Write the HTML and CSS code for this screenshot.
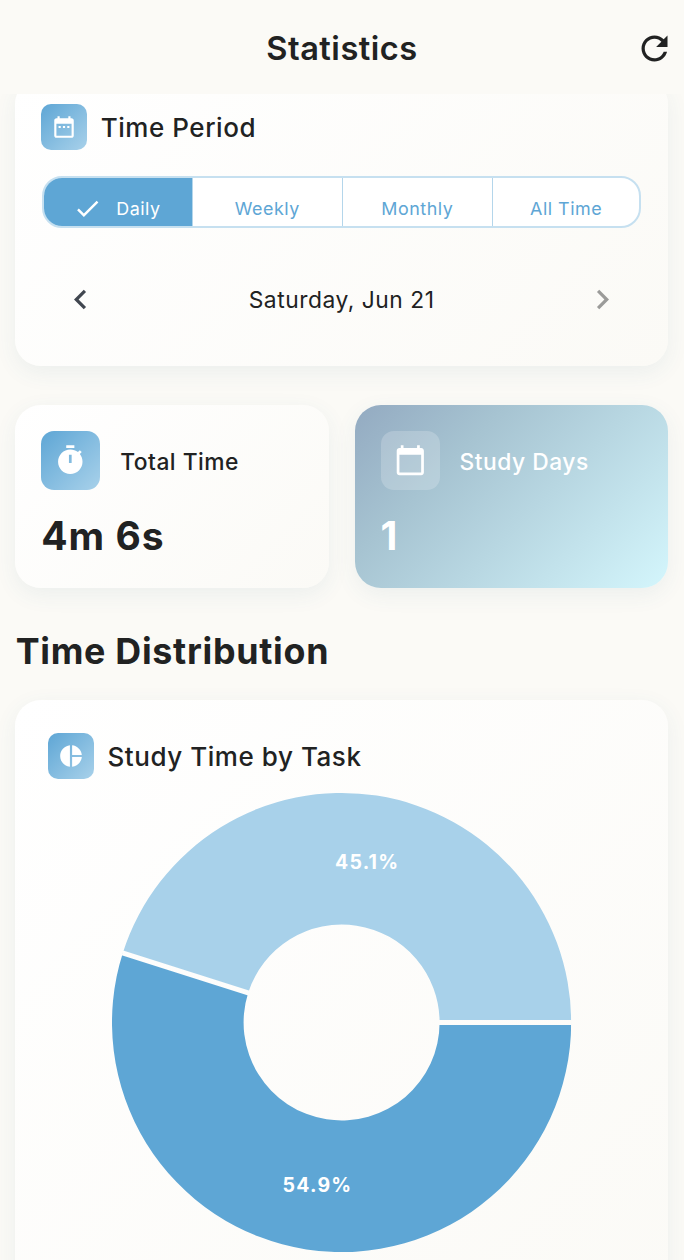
FILE: index.html
```html
<!DOCTYPE html>
<html lang="en">
<head>
<meta charset="utf-8">
<title>Statistics</title>
<link rel="stylesheet" href="styles.css">
</head>
<body>
<header class="app-bar">
  <h1 class="app-title">Statistics</h1>
  <button class="refresh" aria-label="Refresh"><svg class="icon-lg" viewBox="0 0 24 24"><path d="M17.65 6.35C16.2 4.9 14.21 4 12 4c-4.42 0-7.99 3.58-7.99 8s3.57 8 7.99 8c3.73 0 6.84-2.55 7.73-6h-2.08c-.82 2.33-3.04 4-5.65 4-3.31 0-6-2.69-6-6s2.69-6 6-6c1.66 0 3.14.69 4.22 1.78L13 11h7V4l-2.35 2.35z"/></svg></button>
</header>
<main class="content">
  <section class="card period">
    <div class="card-head">
      <span class="badge"><svg class="icon-sm" viewBox="0 0 24 24"><path d="M9 11H7v2h2v-2zm4 0h-2v2h2v-2zm4 0h-2v2h2v-2zm2-7h-1V2h-2v2H8V2H6v2H5c-1.11 0-1.99.9-1.99 2L3 20c0 1.1.89 2 2 2h14c1.1 0 2-.9 2-2V6c0-1.1-.9-2-2-2zm0 16H5V9h14v11z"/></svg></span>
      <h2 class="card-title">Time Period</h2>
    </div>
    <div class="segments">
      <button class="segment selected"><svg class="check" viewBox="0 0 24 24"><path d="M9 16.17 4.83 12l-1.42 1.41L9 19 21 7l-1.41-1.41z"/></svg><span>Daily</span></button>
      <button class="segment"><span>Weekly</span></button>
      <button class="segment"><span>Monthly</span></button>
      <button class="segment"><span>All Time</span></button>
    </div>
    <div class="date-nav">
      <button class="nav-button" aria-label="Previous"><svg class="icon-lg" viewBox="0 0 24 24"><path d="M15.41 7.41 14 6l-6 6 6 6 1.41-1.41L10.83 12z"/></svg></button>
      <span class="date">Saturday, Jun 21</span>
      <button class="nav-button disabled" aria-label="Next"><svg class="icon-lg" viewBox="0 0 24 24"><path d="M10 6 8.59 7.41 13.17 12l-4.58 4.59L10 18l6-6z"/></svg></button>
    </div>
  </section>
  <div class="stats">
    <section class="card stat">
      <div class="stat-head">
        <span class="badge badge-lg"><svg class="icon-md" viewBox="0 0 24 24"><path fill-rule="evenodd" d="M15 1H9v2h6V1zm4.03 6.39 1.42-1.42c-.43-.51-.9-.99-1.41-1.41l-1.42 1.42C16.07 4.74 14.12 4 12 4c-4.97 0-9 4.03-9 9s4.02 9 9 9 9-4.03 9-9c0-2.12-.74-4.07-1.97-5.61zM13 14h-2V8h2v6z"/></svg></span>
        <span class="stat-label">Total Time</span>
      </div>
      <strong class="stat-value">4m 6s</strong>
    </section>
    <section class="card stat tinted">
      <div class="stat-head">
        <span class="badge badge-lg badge-clear"><svg class="icon-md" viewBox="0 0 24 24"><path d="M20 3h-1V1h-2v2H7V1H5v2H4c-1.1 0-2 .9-2 2v16c0 1.1.9 2 2 2h16c1.1 0 2-.9 2-2V5c0-1.1-.9-2-2-2zm0 18H4V8h16v13z"/></svg></span>
        <span class="stat-label">Study Days</span>
      </div>
      <strong class="stat-value">1</strong>
    </section>
  </div>
  <h2 class="section-title">Time Distribution</h2>
  <section class="card distribution">
    <div class="card-head">
      <span class="badge"><svg class="icon-sm" viewBox="0 0 24 24"><path d="M11 2v20c-5.07-.5-9-4.79-9-10s3.93-9.5 9-10zm2.03 0v8.99H22c-.47-4.74-4.24-8.52-8.97-8.99zm0 11.01V22c4.74-.47 8.5-4.25 8.97-8.99h-8.97z"/></svg></span>
      <h3 class="card-title">Study Time by Task</h3>
    </div>
    <svg class="donut" viewBox="-229.6 -230.5 460 460">
      <defs>
        <mask id="gaps" maskUnits="userSpaceOnUse" x="-230" y="-230" width="460" height="460">
          <rect x="-230" y="-230" width="460" height="460" fill="#fff"/>
          <path d="M0 0H230M0 0L-219.2 -69.7" stroke="#000" stroke-width="5"/>
        </mask>
      </defs>
      <g mask="url(#gaps)">
        <path class="slice-dark" d="M229.6 0A229.6 229.6 0 1 1 -218.8 -69.58L-93.4 -29.7A98 98 0 1 0 98 0Z"/>
        <path class="slice-light" d="M229.6 0A229.6 229.6 0 0 0 -218.8 -69.58L-93.4 -29.7A98 98 0 0 1 98 0Z"/>
      </g>
      <text class="slice-label" x="25.5" y="-154">45.1%</text>
      <text class="slice-label" x="-24.2" y="169.2">54.9%</text>
    </svg>
  </section>
</main>
</body>
</html>
```
FILE: styles.css
```css
* { box-sizing: border-box; }
body {
  margin: 0;
  height: 1260px;
  overflow: hidden;
  display: flex;
  flex-direction: column;
  background: #fbfaf6;
  color: #212222;
  font-family: Inter, "Liberation Sans", sans-serif;
}
h1, h2, h3 { margin: 0; }
button { border: 0; padding: 0; margin: 0; background: none; font: inherit; color: inherit; }
svg { display: block; fill: currentColor; }
.app-bar {
  flex: none;
  display: grid;
  grid-template-columns: 60px 1fr 60px;
  align-items: center;
  height: 94px;
  padding-top: 2px;
}
.app-title { grid-column: 2; text-align: center; font-size: 32.6px; font-weight: 600; letter-spacing: 0.5px; }
.refresh { justify-self: end; margin: 1px 10px 0 0; }
.icon-lg { width: 39px; height: 39px; }
.icon-md { width: 32.6px; height: 32.6px; }
.icon-sm { width: 26px; height: 26px; }
.content { flex: 1; min-height: 0; overflow: hidden; padding: 0 16px 0 15.2px; }
.card {
  border-radius: 26px;
  background: linear-gradient(135deg, #ffffff, #fbfaf6);
  box-shadow: 0 6.5px 22px rgba(60, 110, 130, 0.075);
}
.period { height: 288px; margin-top: -16.4px; padding: 26px; }
.card-head { display: flex; align-items: center; gap: 13.5px; }
.badge {
  display: grid;
  place-items: center;
  flex: none;
  width: 46px;
  height: 46px;
  border-radius: 10px;
  background: linear-gradient(135deg, #5ea6d5, #a8d1ea);
  color: #fff;
}
.badge-lg { width: 59px; height: 59px; border-radius: 13px; }
.badge-clear { background: rgba(255, 255, 255, 0.2); }
.card-title { padding-top: 1px; font-size: 26px; font-weight: 500; letter-spacing: 0.55px; }
.segments {
  display: grid;
  grid-template-columns: 147.8px 150px 150px 1fr;
  height: 52px;
  margin: 26.4px 0.6px 0 0.8px;
  overflow: hidden;
  border: 2px solid #c6e0f0;
  border-radius: 20px;
  background: #fff;
}
.segment {
  display: flex;
  align-items: center;
  justify-content: center;
  gap: 14px;
  padding-top: 13px;
  border-left: 1px solid #b4d6eb;
  color: #5ea6d5;
  font-size: 17.9px;
  font-weight: 400;
  letter-spacing: 0.5px;
}
.segment.selected { padding-right: 2px; border-left: 0; background: #5ea6d5; color: #fff; }
.check { width: 29px; height: 29px; }
.date-nav { display: flex; align-items: center; justify-content: space-between; margin-top: 52.3px; padding: 0 20.3px; }
.nav-button { color: #414750; }
.nav-button.disabled { color: #9b9b99; }
.date { font-size: 22.8px; font-weight: 400; letter-spacing: 0.53px; }
.stats { display: grid; grid-template-columns: 1fr 1fr; gap: 26px; margin-top: 39.4px; }
.stat { height: 183px; padding: 26px; }
.tinted { background: linear-gradient(135deg, #93aac1, #a6c3d1 30%, #d4f6fc); color: #fff; }
.stat-head { display: flex; align-items: center; gap: 20px; }
.stat-label { padding-top: 1px; font-size: 22.8px; font-weight: 500; letter-spacing: 0.5px; }
.stat-value { display: block; margin-top: 21px; font-size: 39px; line-height: 50px; font-weight: 700; letter-spacing: 1px; }
.section-title { margin-top: 40px; padding-left: 0.5px; font-size: 35.8px; line-height: 46px; font-weight: 700; letter-spacing: 0.72px; }
.distribution { height: 640px; margin-top: 26px; padding: 32.6px 0 0; }
.distribution .card-head { padding-left: 32.8px; }
.donut { width: 460px; height: 460px; margin: 13.9px auto 0; }
.slice-dark { fill: #5ea6d5; }
.slice-light { fill: #a8d1ea; }
.slice-label { fill: #fff; font-size: 19.5px; font-weight: 650; letter-spacing: 1.2px; text-anchor: middle; }
```
